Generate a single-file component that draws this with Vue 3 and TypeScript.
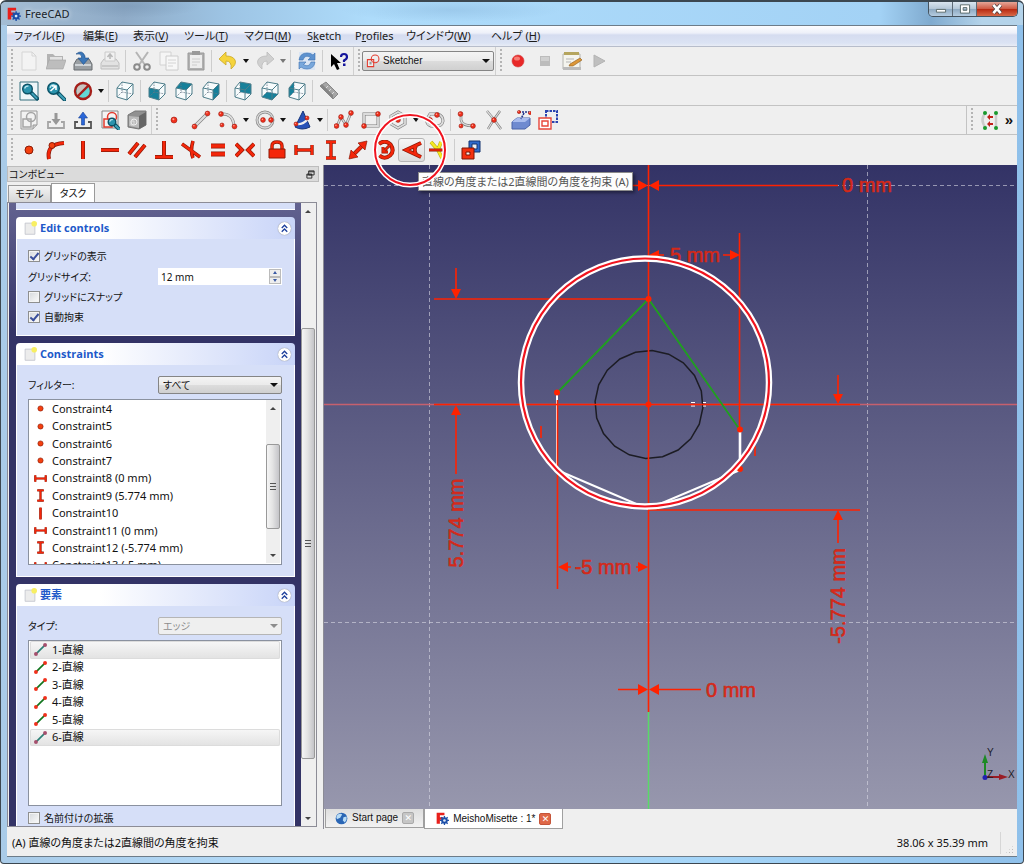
<script setup lang="ts">
import { ref } from 'vue'

interface ToolItem {
  icon?: string
  label?: string
  drop?: boolean
  dim?: boolean
  sep?: boolean
}

const thick = (d: string, w = 3): string =>
  `<path d="${d}" fill="none" stroke="#8d1a08" stroke-width="${w + 1}"/><path d="${d}" fill="none" stroke="#f4260a" stroke-width="${w - 0.4}"/>`
const ball = (x: number, y: number, r = 2.4): string =>
  `<circle cx="${x}" cy="${y}" r="${r}" fill="#f0301c" stroke="#9c1a10" stroke-width=".6"/><circle cx="${x - 0.6}" cy="${y - 0.7}" r="${r / 3}" fill="#ffa79a"/>`
const steel = (d: string, w = 3): string =>
  `<path d="${d}" fill="none" stroke="#7c7c7c" stroke-width="${w}"/><path d="${d}" fill="none" stroke="#dcdcdc" stroke-width="${w - 1.2}"/>`

const faces: Record<string, string> = {
  none: '',
  front: '2,7 12,9 12,19 2,16',
  top: '2,7 7,1 18,3 12,9',
  right: '12,9 18,3 18,13 12,19',
  rear: '7,1 18,3 18,13 7,11',
  bottom: '2,16 7,11 18,13 12,19',
  left: '2,7 7,1 7,11 2,16',
}
const cube = (face: string): string =>
  `<polygon points="2,7 7,1 18,3 18,13 12,19 2,16" fill="#f7fbfc"/>` +
  (faces[face] ? `<polygon points="${faces[face]}" fill="#16809a"/>` : '') +
  `<path d="M7 1V11L2 16M7 11L18 13" fill="none" stroke="#678" stroke-width=".8" stroke-dasharray="1.5 1"/>` +
  `<path d="M2 7L7 1L18 3V13L12 19L2 16ZM2 7L12 9L18 3M12 9V19" fill="none" stroke="#4d7d8a" stroke-width="1"/>`
const lens = (x: number, y: number, r: number): string =>
  `<path d="M${x + r * 0.6} ${y + r * 0.6}L${x + r * 2} ${y + r * 2}" stroke="#0b5266" stroke-width="4" stroke-linecap="round"/><path d="M${x + r} ${y + r}L${x + r * 1.9} ${y + r * 1.9}" stroke="#3fa0b8" stroke-width="2" stroke-linecap="round"/><circle cx="${x}" cy="${y}" r="${r}" fill="#2a93ad" stroke="#0b5266" stroke-width="1.4"/><path d="M${x - r * 0.6} ${y - r * 0.1}A${r * 0.7} ${r * 0.7} 0 0 1 ${x + r * 0.2} ${y - r * 0.6}" fill="none" stroke="#bfe9f2" stroke-width="1.3"/>`
const logo =
  `<path d="M1 1H13V5H6V8H11V12H6V18H1Z" fill="#e8201c"/><g fill="#1d4fa8"><circle cx="13" cy="13" r="5"/><path d="M12 6h2v14h-2zM6 12h14v2h-14z"/><path d="M12 6h2v14h-2zM6 12h14v2h-14z" transform="rotate(45 13 13)"/></g><circle cx="13" cy="13" r="2" fill="#dce8f5"/>`
const sketchShape = (c: string): string =>
  `<path d="M4 9H12V17H4Z" fill="none" stroke="${c}" stroke-width="1.5"/><circle cx="12" cy="7" r="4.5" fill="none" stroke="${c}" stroke-width="1.5"/>`

const icons: Record<string, string> = {
  logo,
  newdoc: `<path d="M3 1H13L17 5V19H3Z" fill="#f3f3f3" stroke="#d5d5d5"/><path d="M13 1V5H17" fill="none" stroke="#d5d5d5"/>`,
  open: `<path d="M1 3H7L9 5H17V17H1Z" fill="#b3b3b3"/><path d="M4 6H16V10H4Z" fill="#e2e2e2"/><path d="M0 18L3 9H20L17 18Z" fill="#bdbdbd" stroke="#a2a2a2" stroke-width=".6"/>`,
  save: `<path d="M1 13L4 8H16L19 13V19H1Z" fill="#9a9fa3" stroke="#686d71"/><path d="M2 13H18V15H2Z" fill="#ced3d7"/><path d="M3 3Q9 -2 12 5V7H16L10.500 13.500L5 7H8.500V5Q7 2 3 3Z" fill="#3a76b8" stroke="#1f4f88" stroke-width=".6"/>`,
  print: `<path d="M1 12L4 8H16L19 12V18H1Z" fill="#e2e2e2" stroke="#bdbdbd"/><path d="M2 14H18V16H2Z" fill="#c8c8c8"/><path d="M5 1H15V10H5Z" fill="#f1f1f1" stroke="#cacaca"/><path d="M10 8V4M7.500 6L10 3L12.500 6" fill="none" stroke="#b9b9b9" stroke-width="1.600"/>`,
  cut: `<path d="M4 1L13 14M16 1L7 14" stroke="#b5b5b5" stroke-width="2"/><circle cx="5" cy="16" r="2.800" fill="none" stroke="#8b8b8b" stroke-width="2"/><circle cx="15" cy="16" r="2.800" fill="none" stroke="#8b8b8b" stroke-width="2"/>`,
  copy: `<path d="M1 1H12V14H1Z" fill="#f5f5f5" stroke="#d2d2d2"/><path d="M7 5H19V19H7Z" fill="#f7f7f7" stroke="#ccc"/><path d="M9 9H17M9 12H17M9 15H14" stroke="#d4d4d4"/>`,
  paste: `<path d="M2 2H18V19H2Z" fill="#b0b0b0" stroke="#999"/><path d="M4 4H16V17H4Z" fill="#ededed"/><path d="M6 0H14V4H6Z" fill="#999"/><path d="M6 8H14M6 11H14M6 14H11" stroke="#ccc"/>`,
  undo: `<path d="M8 1L1 8L8 14V10Q14 10 13 18Q19 13 17 9Q15 5 8 5Z" fill="#f5d43c" stroke="#c9a727" stroke-width=".8"/>`,
  redo: `<path d="M12 1L19 8L12 14V10Q6 10 7 18Q1 13 3 9Q5 5 12 5Z" fill="#d0d0d0" stroke="#bbb" stroke-width=".8"/>`,
  refresh: `<path d="M2 1H18V19H2Z" fill="#dbe6f4"/><path d="M2 9Q3 2 10 2Q14 2 16 4L18 2V9H11L13.500 6.500Q8 3 6 9Z" fill="#5d92cf" stroke="#3d70b0" stroke-width=".6"/><path d="M18 11Q17 18 10 18Q6 18 4 16L2 18V11H9L6.500 13.500Q12 17 14 11Z" fill="#79a8dc" stroke="#3d70b0" stroke-width=".6"/>`,
  help: `<path d="M2 3V16L5 13L8 19L10.500 18L8 12H12Z" fill="#000"/><path d="M12 6Q12 3 15 3Q18 3 18 6Q18 8 15 9.500V11" fill="none" stroke="#16169c" stroke-width="2.200"/><path d="M14 12.500H16.500V15H14Z" fill="#16169c"/>`,
  record: `<circle cx="10" cy="10" r="6" fill="#e82828" stroke="#d34040" stroke-width=".6"/><ellipse cx="9" cy="7.500" rx="3" ry="2" fill="#f77d75"/>`,
  stop: `<path d="M5 5H15V15H5Z" fill="#bcbcbc"/><path d="M6 6H14V10H6Z" fill="#d0d0d0"/>`,
  edit: `<path d="M1 3H18V18H1Z" fill="#f4f4ee" stroke="#b4b4ae"/><path d="M2 1H17V4H2Z" fill="#b5a55e"/><path d="M4 8H12M4 11H9" stroke="#b5b5b5"/><path d="M8 13L18 7L20 9L11 15L7 15Z" fill="#dd9738" stroke="#8b5a1c" stroke-width=".6"/><path d="M1 16H19V19H1Z" fill="#bbb"/>`,
  play: `<path d="M5 4L16 10L5 16Z" fill="#bfbfbf" stroke="#b3b3b3"/>`,
  fit: `<path d="M1 1H19V19H1Z" fill="#eef6f9" stroke="#35717f"/>${lens(8.5, 8, 4.8)}`,
  zoomsel: `${lens(7.5, 7.5, 5.8)}<path d="M6 5H10V9M10 5L4.500 10" fill="none" stroke="#fff" stroke-width="1.600"/>`,
  drawstyle: `<circle cx="10" cy="10" r="8" fill="#63d8d6"/><path d="M4 15L15 4Q8 1 4 6Z" fill="#c9c4c0"/><circle cx="10" cy="10" r="8" fill="none" stroke="#a51f1a" stroke-width="2.400"/><path d="M4 16L16 4" stroke="#a51f1a" stroke-width="2.400"/>`,
  iso: cube('none'), front: cube('front'), top: cube('top'), right: cube('right'),
  rear: cube('rear'), bottom: cube('bottom'), left: cube('left'),
  measure: `<path d="M1 5L7 1L19 13L14 18Z" fill="#a5a5a5" stroke="#888"/><path d="M1 5L14 18V14L3 3Z" fill="#858585"/><path d="M9 5L7 7M12 8L10 10M15 11L13 13" stroke="#ddd"/>`,
  sketchnew: `<path d="M2 1H18V15L14 19H2Z" fill="#f2f2f2" stroke="#999"/>${sketchShape('#a5a5a5')}<path d="M18 15H14V19" fill="#ccc" stroke="#999"/>`,
  leave: `<path d="M5 12H2V18H18V12H15" fill="none" stroke="#a5a5a5" stroke-width="1.800"/><path d="M8.500 3H11.500V9H14.500L10 15L5.500 9H8.500Z" fill="#979797"/>`,
  attach: `<path d="M5 12H2V18H18V12H15" fill="none" stroke="#555" stroke-width="1.800"/><path d="M8.500 15H11.500V8H14.500L10 2L5.500 8H8.500Z" fill="#2a67d8" stroke="#153f93" stroke-width=".6"/>`,
  viewsketch: `<path d="M2 1H18V18H2Z" fill="#f4f4f4" stroke="#888"/>${sketchShape('#e33b2e')}${lens(12, 12, 3.8)}`,
  mapsketch: `<path d="M1 5L8 1H19V15L12 19L1 17Z" fill="#909090" stroke="#777"/><path d="M12 6L19 2V15L12 19Z" fill="#666"/><path d="M2 6L12 7V18L2 16Z" fill="#b9b9b9"/><circle cx="7" cy="12" r="3" fill="none" stroke="#eee"/><path d="M4 11H7V15H4Z" fill="none" stroke="#ddd"/>`,
  pt: ball(10, 10, 3),
  line: `${steel('M3 17L17 3', 3.6)}${ball(3.5, 16.5)}${ball(16.5, 3.5)}`,
  arc: `${steel('M3 4Q15 3 16 16', 3)}${ball(3, 4)}${ball(4, 15, 2)}${ball(16.5, 16.5)}`,
  circle: `<circle cx="10" cy="10" r="8" fill="none" stroke="#888" stroke-width="2.800"/><circle cx="10" cy="10" r="8" fill="none" stroke="#d6d6d6" stroke-width="1.400"/>${ball(8, 10)}${ball(16, 10)}`,
  conic: `<path d="M11 1L18 17Q10 21 3 17Z" fill="#2752b8" stroke="#173578"/><path d="M4 14Q11 15 16 9" fill="none" stroke="#eee" stroke-width="2"/>${ball(4, 14, 2)}${ball(15, 8, 2)}`,
  poly: `${steel('M3 16L7 7L12 15L17 3', 2.6)}${ball(2.500, 16)}${ball(7, 7)}${ball(12, 15)}${ball(17, 3)}`,
  rect: `${steel('M3 4H17V16H3Z', 3)}${ball(3, 16)}${ball(17, 4)}`,
  hex: `${steel('M10 2L17 6V14L10 18L3 14V6Z', 3)}${ball(10, 10)}`,
  slot: `${steel('M5 4H13Q18 6 18 11Q17 16 12 16H6Q1 14 2 9Z', 3)}${ball(5, 10)}${ball(12, 5)}`,
  fillet: `${steel('M4 2V10Q5 16 17 16', 2.600)}${ball(3.500, 4)}${ball(4, 16, 2)}${ball(16, 16)}`,
  trim: `${steel('M3 1Q10 9 17 19M16 1Q9 10 4 19', 2.400)}${ball(10, 10)}`,
  external: `<path d="M1 12L6 8H19V15L14 19H1Z" fill="#6f8ad0" stroke="#4a62a8"/><path d="M1 12L6 8H19L14 12Z" fill="#a9bcee"/><path d="M8 2H18M13 3L10 9" fill="none" stroke="#26388f" stroke-width="1.600" stroke-dasharray="2 1"/>${ball(8, 2, 1.6)}${ball(19, 3, 1.6)}`,
  carbon: `<path d="M8 1H19V12H8Z" fill="none" stroke="#2a43b0" stroke-width="2" stroke-dasharray="2.500 1"/><path d="M1 8H13V19H1ZM4 11H10V16H4Z" fill="#fff" stroke="#e8453a" stroke-width="1.400"/>`,
  bspline: `<path d="M7 2Q0 10 7 18M17 3V17" fill="none" stroke="#ccc" stroke-width="2.500"/><g fill="#1a9a2e"><circle cx="6" cy="3" r="2"/><circle cx="17" cy="3" r="2"/><circle cx="6" cy="18" r="2"/><circle cx="17" cy="18" r="2"/></g><path d="M14 7H10M14 14H10" stroke="#c0201a" stroke-width="2"/><path d="M11 4V10L8 7ZM11 11V17L8 14Z" fill="#c0201a"/>`,
  cpoint: `<circle cx="10" cy="10" r="4" fill="#f4400f" stroke="#8a1b08"/>`,
  conobj: `${thick('M3 19Q0 4 18 3', 3)}<circle cx="6" cy="5.500" r="3" fill="#f4400f" stroke="#8a1b08"/>`,
  cvert: thick('M10 1V19'),
  chor: thick('M1 10H19'),
  cpar: thick('M2 14L11 3M8 17L18 5'),
  cperp: thick('M10 1V17M1 17H19'),
  ctan: thick('M1 4L19 17M12 1Q9 11 12 18', 2.6),
  cequal: thick('M3 6H17M3 14H17', 4),
  csym: thick('M1 4L7 10L1 16M19 4L13 10L19 16', 3),
  clock: `<path d="M5 9V6Q5 2 10 2Q15 2 15 6V9" fill="none" stroke="#8d1a08" stroke-width="3.400"/><path d="M5 9V6Q5 2 10 2Q15 2 15 6V9" fill="none" stroke="#f4260a" stroke-width="2"/><path d="M2 9H18V18H2Z" fill="#f4260a" stroke="#8d1a08"/>`,
  chdist: thick('M2 5V15M18 5V15M2 10H18', 2.4),
  cvdist: thick('M5 2H15M5 18H15M10 2V18', 2.4),
  cdist: `${thick('M5 15L15 5', 3)}<path d="M1 19L3 10L10 17ZM19 1L17 10L10 3Z" fill="#f4260a" stroke="#8d1a08" stroke-width=".7"/>`,
  crad: `${thick('M4 4Q10 -1 15.500 4.500Q20 11 15 15.500Q9.500 20 4.500 15.500', 3)}${thick('M9 11L15 5M8 7V12H13', 2)}`,
  cangle: thick('M19 3L4 10L19 17M14 6Q11.500 10 14 14', 2.8),
  csnell: `<path d="M2 2L9 10L13 18M12 2L9 10" fill="none" stroke="#b8ac12" stroke-width="3.600"/><path d="M2 2L9 10L13 18M12 2L9 10" fill="none" stroke="#f5ea22" stroke-width="2.600"/>${thick('M0 10H14', 2)}`,
  ctoggle: `<path d="M8 1H19V12H8ZM11 4H16V9H11Z" fill="#2e6acc" fill-rule="evenodd" stroke="#12336e"/><path d="M1 8H13V19H1ZM5 12H9V15H5Z" fill="#f4300f" fill-rule="evenodd" stroke="#7d1405"/>`,
  note: `<path d="M3 3H17V19H3Z" fill="#ececec" stroke="#b9bcc6"/><circle cx="16" cy="4" r="4" fill="#f8ef62"/>`,
  sketcher: `<path d="M2 8H11V18H2Z" fill="#eee" stroke="#e33b2e" stroke-width="1.500"/><circle cx="13" cy="7" r="5.500" fill="none" stroke="#e33b2e" stroke-width="1.500"/><path d="M5 11H8V15H5Z" fill="#999"/>`,
  edge: `<path d="M4 16L16 4" stroke="#12761f" stroke-width="2.600"/><circle cx="3" cy="17" r="3" fill="#f0301c"/><circle cx="17" cy="3" r="3" fill="#f0301c"/>`,
  edgesel: `<path d="M4 16L16 4" stroke="#2c8076" stroke-width="2.600"/><circle cx="3" cy="17" r="3" fill="#a54f6d"/><circle cx="17" cy="3" r="3" fill="#a54f6d"/>`,
  chevrons: `<path d="M5 9L10 4L15 9M5 16L10 11L15 16" fill="none" stroke="#1c3f9c" stroke-width="2.400"/>`,
  globe: `<circle cx="10" cy="10" r="9" fill="#2a66b5"/><path d="M4 4Q9 1 11 4L8 9L3 11Q1 7 4 4ZM13 8L18 7Q19 12 15 16L12 13Z" fill="#b9dcf5"/>`,
  float: `<path d="M6 2H18V11H6ZM6 4H18M2 9H13V18H2ZM2 11H13" fill="#dcdcdc" stroke="#222" stroke-width="2"/>`,
}

const t = (icon: string, label: string, extra: Partial<ToolItem> = {}): ToolItem => ({ icon, label, ...extra })
const sep: ToolItem = { sep: true }

const fileTools: ToolItem[] = [
  t('newdoc', 'New'), t('open', 'Open'), t('save', 'Save'), t('print', 'Print'), sep,
  t('cut', 'Cut'), t('copy', 'Copy'), t('paste', 'Paste'), sep,
  t('undo', 'Undo', { drop: true }), t('redo', 'Redo', { drop: true, dim: true }), sep,
  t('refresh', 'Refresh'), sep, t('help', "What's this?"),
]
const macroTools: ToolItem[] = [t('record', 'Record'), t('stop', 'Stop'), t('edit', 'Macros'), t('play', 'Execute')]
const viewTools: ToolItem[] = [
  t('fit', 'Fit all'), t('zoomsel', 'Fit selection'), t('drawstyle', 'Draw style', { drop: true }), sep,
  t('iso', 'Axonometric'), sep, t('front', 'Front'), t('top', 'Top'), t('right', 'Right'), sep,
  t('rear', 'Rear'), t('bottom', 'Bottom'), t('left', 'Left'), sep, t('measure', 'Measure'),
]
const sketchTools: ToolItem[] = [
  t('sketchnew', 'New sketch'), t('leave', 'Leave sketch'), t('attach', 'Attach'),
  t('viewsketch', 'View sketch'), t('mapsketch', 'Map sketch'),
]
const geometryTools: ToolItem[] = [
  t('pt', 'Point'), t('line', 'Line'), t('arc', 'Arc', { drop: true }), t('circle', 'Circle', { drop: true }),
  t('conic', 'Conic', { drop: true }), sep, t('poly', 'Polyline'), t('rect', 'Rectangle'),
  t('hex', 'Polygon', { drop: true }), t('slot', 'Slot'), sep, t('fillet', 'Fillet'), t('trim', 'Trim'),
  t('external', 'External geometry'), t('carbon', 'Construction mode'),
]
const constraintTools: ToolItem[] = [
  t('cpoint', 'Coincident'), t('conobj', 'Point on object'), t('cvert', 'Vertical'), t('chor', 'Horizontal'),
  t('cpar', 'Parallel'), t('cperp', 'Perpendicular'), t('ctan', 'Tangent'), t('cequal', 'Equal'),
  t('csym', 'Symmetric'), sep, t('clock', 'Lock'), t('chdist', 'Horizontal distance'),
  t('cvdist', 'Vertical distance'), t('cdist', 'Distance'), t('crad', 'Radius'), t('cangle', 'Angle'),
  t('csnell', "Snell's law"), sep, t('ctoggle', 'Toggle reference'),
]

const menus: { pre: string; key: string; post: string }[] = [
  { pre: 'ファイル(', key: 'F', post: ')' },
  { pre: '編集(', key: 'E', post: ')' },
  { pre: '表示(', key: 'V', post: ')' },
  { pre: 'ツール(', key: 'T', post: ')' },
  { pre: 'マクロ(', key: 'M', post: ')' },
  { pre: 'S', key: 'k', post: 'etch' },
  { pre: 'P', key: 'r', post: 'ofiles' },
  { pre: 'ウインドウ(', key: 'W', post: ')' },
  { pre: 'ヘルプ (', key: 'H', post: ')' },
]

const constraints: { icon: string; text: string }[] = [
  { icon: 'cpoint', text: 'Constraint4' },
  { icon: 'cpoint', text: 'Constraint5' },
  { icon: 'cpoint', text: 'Constraint6' },
  { icon: 'cpoint', text: 'Constraint7' },
  { icon: 'chdist', text: 'Constraint8 (0 mm)' },
  { icon: 'cvdist', text: 'Constraint9 (5.774 mm)' },
  { icon: 'cvert', text: 'Constraint10' },
  { icon: 'chdist', text: 'Constraint11 (0 mm)' },
  { icon: 'cvdist', text: 'Constraint12 (-5.774 mm)' },
  { icon: 'chdist', text: 'Constraint13 (-5 mm)' },
]
const elements = [1, 2, 3, 4, 5, 6]
const picked = ref<number[]>([1, 6])

const showGrid = ref(true)
const snapGrid = ref(false)
const autoConstrain = ref(true)
const extendedNaming = ref(false)
const gridSize = ref('12 mm')

const circlePoints = Array.from({ length: 20 }, (_, i) => {
  const a = (i * Math.PI) / 10 + 0.06
  return `${(649 + 54 * Math.cos(a)).toFixed(1)},${(404.5 + 54 * Math.sin(a)).toFixed(1)}`
}).join(' ')
</script>

<template>
  <div class="window">
    <header class="titlebar">
      <svg class="title-icon" viewBox="0 0 20 20" v-html="icons.logo"></svg>
      <span class="title">FreeCAD</span>
      <div class="window-buttons">
        <button class="wb" aria-label="Minimize"><svg viewBox="0 0 24 16"><path d="M7 9H17V12H7Z" fill="#fff" stroke="#566" /></svg></button>
        <button class="wb" aria-label="Maximize"><svg viewBox="0 0 24 16"><path d="M7 4H17V13H7ZM10 7H14V10H10Z" fill="#fff" fill-rule="evenodd" stroke="#566" /></svg></button>
        <button class="wb close" aria-label="Close"><svg viewBox="0 0 24 16"><path d="M8 4L16 13M16 4L8 13" stroke="#544" stroke-width="4.500" /><path d="M8 4L16 13M16 4L8 13" stroke="#fff" stroke-width="2.800" /></svg></button>
      </div>
    </header>

    <div class="client">
      <nav class="menubar">
        <button v-for="m in menus" :key="m.key" class="menu">{{ m.pre }}<u>{{ m.key }}</u>{{ m.post }}</button>
      </nav>

      <div class="toolrow">
        <div class="toolbar">
          <i class="handle"></i>
          <template v-for="(it, i) in fileTools" :key="i">
            <i v-if="it.sep" class="sep"></i>
            <button v-else class="tool" :aria-label="it.label"><svg viewBox="0 0 20 20" v-html="icons[it.icon!]"></svg></button>
            <button v-if="it.drop" class="drop" :class="{ dim: it.dim }" :aria-label="it.label + ' history'"></button>
          </template>
        </div>
        <div class="toolbar">
          <i class="handle"></i>
          <div class="combo workbench">
            <svg class="combo-icon" viewBox="0 0 20 20" v-html="icons.sketcher"></svg>
            <select aria-label="Workbench"><option>Sketcher</option></select>
          </div>
        </div>
        <div class="toolbar">
          <i class="handle"></i>
          <button v-for="it in macroTools" :key="it.icon" class="tool" :aria-label="it.label"><svg viewBox="0 0 20 20" v-html="icons[it.icon!]"></svg></button>
        </div>
      </div>

      <div class="toolrow">
        <div class="toolbar">
          <i class="handle"></i>
          <template v-for="(it, i) in viewTools" :key="i">
            <i v-if="it.sep" class="sep"></i>
            <button v-else class="tool" :aria-label="it.label"><svg viewBox="0 0 20 20" v-html="icons[it.icon!]"></svg></button>
            <button v-if="it.drop" class="drop" :aria-label="it.label + ' options'"></button>
          </template>
        </div>
      </div>

      <div class="toolrow">
        <div class="toolbar">
          <i class="handle"></i>
          <button v-for="it in sketchTools" :key="it.icon" class="tool" :aria-label="it.label"><svg viewBox="0 0 20 20" v-html="icons[it.icon!]"></svg></button>
        </div>
        <div class="toolbar open-ended">
          <i class="handle"></i>
          <template v-for="(it, i) in geometryTools" :key="i">
            <i v-if="it.sep" class="sep"></i>
            <button v-else class="tool" :aria-label="it.label"><svg viewBox="0 0 20 20" v-html="icons[it.icon!]"></svg></button>
            <button v-if="it.drop" class="drop" :aria-label="it.label + ' options'"></button>
          </template>
        </div>
        <div class="toolbar trailing">
          <i class="handle"></i>
          <button class="tool" aria-label="B-spline"><svg viewBox="0 0 20 20" v-html="icons.bspline"></svg></button>
          <button class="more" aria-label="More tools">»</button>
        </div>
      </div>

      <div class="toolrow last">
        <div class="toolbar">
          <i class="handle"></i>
          <template v-for="(it, i) in constraintTools" :key="i">
            <i v-if="it.sep" class="sep"></i>
            <span v-else-if="it.icon === 'cangle'" class="tip-anchor">
              <button class="tool hot" :aria-label="it.label"><svg viewBox="0 0 20 20" v-html="icons.cangle"></svg></button>
              <span class="tooltip" role="tooltip">直線の角度または2直線間の角度を拘束 (A)</span>
              <svg class="ring" viewBox="0 0 76 76">
                <circle cx="38" cy="38" r="35" fill="none" stroke="#fff" stroke-width="5" />
                <circle cx="38" cy="38" r="35" fill="none" stroke="#f01420" stroke-width="2" />
              </svg>
            </span>
            <button v-else class="tool" :aria-label="it.label"><svg viewBox="0 0 20 20" v-html="icons[it.icon!]"></svg></button>
          </template>
        </div>
      </div>

      <main class="main">
        <aside class="dock">
          <div class="dock-title">
            <span>コンボビュー</span>
            <button class="float" aria-label="Float"><svg viewBox="0 0 20 20" v-html="icons.float"></svg></button>
          </div>
          <div class="dock-tabs" role="tablist">
            <button role="tab" class="dtab">モデル</button>
            <button role="tab" class="dtab on" aria-selected="true">タスク</button>
          </div>
          <div class="page">
            <div class="tasks">
              <div class="stub"></div>

              <section class="panel">
                <h2 class="phead">
                  <svg class="pnote" viewBox="0 0 20 20" v-html="icons.note"></svg><span>Edit controls</span>
                  <button class="fold" aria-label="Fold"><svg viewBox="0 0 20 20" v-html="icons.chevrons"></svg></button>
                </h2>
                <div class="pbody controls">
                  <label class="check"><input v-model="showGrid" type="checkbox" />グリッドの表示</label>
                  <div class="field">
                    <label for="grid-size">グリッドサイズ:</label>
                    <div class="spin">
                      <input id="grid-size" v-model="gridSize" type="text" />
                      <div class="spin-buttons">
                        <button class="up" aria-label="Increase"></button>
                        <button class="down" aria-label="Decrease"></button>
                      </div>
                    </div>
                  </div>
                  <label class="check"><input v-model="snapGrid" type="checkbox" />グリッドにスナップ</label>
                  <label class="check"><input v-model="autoConstrain" type="checkbox" />自動拘束</label>
                </div>
              </section>

              <section class="panel">
                <h2 class="phead">
                  <svg class="pnote" viewBox="0 0 20 20" v-html="icons.note"></svg><span>Constraints</span>
                  <button class="fold" aria-label="Fold"><svg viewBox="0 0 20 20" v-html="icons.chevrons"></svg></button>
                </h2>
                <div class="pbody">
                  <div class="field">
                    <label for="filter">フィルター:</label>
                    <div class="combo"><select id="filter"><option>すべて</option></select></div>
                  </div>
                  <div class="listbox">
                    <ul class="rows">
                      <li v-for="c in constraints" :key="c.text"><svg viewBox="0 0 20 20" v-html="icons[c.icon]"></svg>{{ c.text }}</li>
                    </ul>
                    <div class="scroll">
                      <button class="arrow up" aria-label="Scroll up"></button>
                      <div class="track inner"><div class="thumb"></div></div>
                      <button class="arrow down" aria-label="Scroll down"></button>
                    </div>
                  </div>
                </div>
              </section>

              <section class="panel grow">
                <h2 class="phead">
                  <svg class="pnote" viewBox="0 0 20 20" v-html="icons.note"></svg><span>要素</span>
                  <button class="fold" aria-label="Fold"><svg viewBox="0 0 20 20" v-html="icons.chevrons"></svg></button>
                </h2>
                <div class="pbody cut">
                  <div class="field">
                    <label for="kind">タイプ:</label>
                    <div class="combo off"><select id="kind" disabled><option>エッジ</option></select></div>
                  </div>
                  <div class="listbox">
                    <ul class="rows six">
                      <li v-for="n in elements" :key="n" :class="{ sel: picked.includes(n) }">
                        <svg viewBox="0 0 20 20" v-html="icons[picked.includes(n) ? 'edgesel' : 'edge']"></svg>{{ n }}-直線
                      </li>
                    </ul>
                  </div>
                  <label class="check naming"><input v-model="extendedNaming" type="checkbox" />名前付けの拡張</label>
                </div>
              </section>
            </div>
            <div class="scroll">
              <button class="arrow up" aria-label="Scroll up"></button>
              <div class="track outer"><div class="thumb"></div></div>
              <button class="arrow down" aria-label="Scroll down"></button>
            </div>
          </div>
        </aside>

        <section class="view">
          <div class="canvas">
            <svg class="scene" viewBox="324 165 693 644" preserveAspectRatio="xMidYMid slice">
              <g class="grid">
                <path d="M429.500 165V809M867.500 165V809M324 185.500H1017M324 622.500H1017" />
              </g>
              <path d="M324 404.500H1017" stroke="#c6606e" stroke-width="1.500" />
              <path d="M648.500 712V809" stroke="#59d968" stroke-width="1.500" />
              <polygon :points="circlePoints" fill="none" stroke="#1c1c24" stroke-width="1.500" />
              <path d="M557 393V470L648 509L740 470" fill="none" stroke="#fff" stroke-width="2" />
              <path d="M740 430V462" stroke="#fff" stroke-width="2.600" />
              <path d="M691 402.500H695M691 406H695M703 402.500H706M703 406H706" stroke="#fff" />
              <g class="dims">
                <path d="M434 404.500H860M648.500 165V712M434 299H648M648 510H860M739.500 233V430M557.500 400V589" />
                <path d="M618 185.500H640M658 185.500H838M658 255H664M723 255H730M456 268V290M456 414V474M838 375V395M838 519V543M567 567H571M636 567H640M618 689.500H640M658 689.500H701" />
                <path d="M541 426V438M755 446V456" stroke-width="2" />
              </g>
              <path d="M557 393L648.500 299L740 430" fill="none" stroke="#1fa01f" stroke-width="1.800" />
              <g fill="#ff2200">
                <path d="M648 185.500L638 180V191ZM649 185.500L659 180V191ZM649 255L659 250V260ZM740 255L730 250V260ZM456 299L451 289H461ZM456 405L451 415H461ZM838 404L833 394H843ZM838 510L833 520H843ZM558 567L568 562V572ZM648 567L638 562V572ZM648 689.500L638 684V695ZM649 689.500L659 684V695Z" />
                <circle cx="648.500" cy="299" r="3" /><circle cx="557" cy="392.500" r="3" /><circle cx="740" cy="429.500" r="3" />
                <circle cx="740" cy="469" r="3" /><circle cx="648.500" cy="404.500" r="3" />
              </g>
              <g class="dimtext">
                <text x="867" y="192">0 mm</text>
                <text x="695" y="262">5 mm</text>
                <text x="603" y="574">-5 mm</text>
                <text x="731" y="697">0 mm</text>
                <text transform="translate(463 523) rotate(-90)">5.774 mm</text>
                <text transform="translate(845 596) rotate(-90)">-5.774 mm</text>
              </g>
              <circle cx="645" cy="382.500" r="124" fill="none" stroke="#fff" stroke-width="6.500" />
              <circle cx="645" cy="382.500" r="124" fill="none" stroke="#f0141e" stroke-width="2.200" />
              <g class="axes">
                <path d="M985 777V760" stroke="#1c8a24" stroke-width="2" /><path d="M985 754L988 763H982Z" fill="#1c8a24" />
                <path d="M985 777H1000" stroke="#9a1c24" stroke-width="2" /><path d="M1008 777L999 774V780Z" fill="#9a1c24" />
                <circle cx="985" cy="777.500" r="2.500" fill="#2222b0" />
                <text x="987" y="756">Y</text><text x="987" y="778">Z</text><text x="1008" y="778">X</text>
              </g>
            </svg>
          </div>
          <div class="doc-tabs" role="tablist">
            <div class="doc">
              <svg viewBox="0 0 20 20" v-html="icons.globe"></svg>
              <button role="tab">Start page</button>
              <button class="x" aria-label="Close tab">✕</button>
            </div>
            <div class="doc on">
              <svg viewBox="0 0 20 20" v-html="icons.logo"></svg>
              <button role="tab" aria-selected="true">MeishoMisette : 1*</button>
              <button class="x" aria-label="Close tab">✕</button>
            </div>
          </div>
        </section>
      </main>

      <footer class="status">
        <span>(A) 直線の角度または2直線間の角度を拘束</span>
        <span class="size">38.06 x 35.39 mm</span>
        <i class="grip"></i>
      </footer>
    </div>
  </div>
</template>

<style>
body { margin: 0; }
</style>

<style scoped>
* { box-sizing: border-box; }
button, select, input { font: inherit; color: inherit; margin: 0; }
button { padding: 0; border: 0; background: none; white-space: nowrap; }
ul { margin: 0; padding: 0; list-style: none; }
svg { display: block; flex: none; }
i { flex: none; }

.window {
  display: flex;
  flex-direction: column;
  height: 100vh;
  overflow: hidden;
  padding: 0 6px 6px 6px;
  border: 1px solid #3c4750;
  border-top-width: 2px;
  border-radius: 6px 6px 4px 4px;
  background: linear-gradient(90deg, #a9cbe8, #b4dcfa 30%, #a5d5f8 70%, #8fc0ea);
  font: 11px/16px "Noto Sans", "Noto Sans CJK JP", sans-serif;
  font-feature-settings: "palt";
  color: #111;
}
.titlebar {
  display: flex;
  align-items: center;
  height: 23px;
  flex: none;
  margin: 0 -6px;
  padding-left: 6px;
  background:
    radial-gradient(ellipse 70px 12px at 130px 4px, #6d8aa866, transparent),
    radial-gradient(ellipse 110px 12px at 450px 8px, #6f9cc544, transparent),
    linear-gradient(90deg, #a4bdd4, #8fabc7 12%, #9dc4e4 22%, #aedcfb 36%, #a3d2f5 86%, #7faacf 91%, #b4d3ea 96%);
}
.title-icon { width: 14px; height: 14px; }
.title { margin-left: 4px; font-size: 11px; color: #1a242c; text-shadow: 0 0 5px #fff; }
.window-buttons {
  display: flex;
  align-self: flex-start;
  margin: 0 5px 0 auto;
  border: 1px solid #45525e;
  border-top: 0;
  border-radius: 0 0 5px 5px;
  overflow: hidden;
}
.wb { width: 24px; height: 14px; background: linear-gradient(#d9e5ef, #b4c7d8 48%, #8faac2 52%, #b5cce0); border-right: 1px solid #5d6a76; }
.wb svg { width: 22px; height: 15px; margin: -1px auto 0; }
.close { width: 40px; border-right: 0; background: linear-gradient(#e5a698, #cf5a44 48%, #b82a12 52%, #d96a48); }

.client {
  display: flex;
  flex-direction: column;
  flex: 1;
  min-height: 0;
  border: 1px solid #6d7c89;
  border-width: 1px 0;
  background: #efefef;
}
.menubar {
  display: grid;
  grid-template-columns: 69px 50px 51px 60px 63px 48px 51px 85px 70px;
  height: 21px;
  flex: none;
  padding-left: 7px;
  background: linear-gradient(#fdfdff, #edf0f9 35%, #d5dcf0 45%, #dbe3f4 85%, #e8ecf5);
  border-bottom: 1px solid #b7bdcb;
}
.menu { text-align: left; color: #1b1b1b; }

.toolrow { display: flex; height: 29px; flex: none; border-bottom: 1px solid #c3c3c3; background: #efefef; }
.toolrow:nth-child(3) { height: 30px; }
.toolrow.last { height: 30px; border-bottom: 0; }
.toolbar { display: flex; align-items: center; padding-right: 1px; border-right: 1px solid #d0d0d0; }
.toolbar:only-child, .toolbar:last-child, .open-ended { border-right: 0; }
.trailing { margin-left: auto; border-left: 1px solid #c3c3c3; }
.handle {
  width: 8px;
  height: 24px;
  background: repeating-linear-gradient(#b4b4b4 0 2px, transparent 2px 4px) no-repeat 4px 0 / 2px 24px;
}
.sep { width: 1px; height: 22px; margin: 0 2px; background: #cdcdcd; }
.tool { display: grid; place-items: center; width: 27px; height: 24px; flex: none; }
.tool svg { width: 20px; height: 20px; }
.hot { border: 1px solid #b5b5b5; border-radius: 3px; background: linear-gradient(#f6f6f6, #dcdcdc); }
.drop { display: grid; place-items: center; width: 10px; height: 24px; }
.drop::after { content: ""; border: 3px solid transparent; border-top: 4px solid #111; border-bottom: 0; }
.drop.dim::after { border-top-color: #777; }
.more { width: 14px; font: bold 15px/20px "Liberation Sans", sans-serif; }

.tip-anchor { position: relative; z-index: 2; }
.tooltip {
  position: absolute;
  left: 20px;
  top: 34px;
  padding: 0 3px;
  border: 1px solid #8c8c8c;
  background: #fdfdfd;
  box-shadow: 2px 2px 3px #0006;
  line-height: 17px;
  color: #555;
  white-space: nowrap;
}
.ring { position: absolute; left: -26px; top: -26px; width: 76px; height: 76px; pointer-events: none; }

.combo { position: relative; width: 124px; height: 18px; font-size: 10px; }
.combo select {
  display: block;
  width: 100%;
  height: 100%;
  padding: 0 4px;
  appearance: none;
  border: 1px solid #858585;
  border-radius: 2px;
  background: linear-gradient(#f4f4f4, #ebebeb 48%, #dcdcdc 52%, #d0d0d0);
  color: #111;
  opacity: 1;
}
.combo::after {
  content: "";
  position: absolute;
  right: 4px;
  top: 7px;
  border: 4px solid transparent;
  border-top: 4px solid #111;
  border-bottom: 0;
}
.combo.off select { background: #efefef; border-color: #b5b5b5; color: #8d8d8d; }
.combo.off::after { border-top-color: #8d8d8d; }
.workbench { width: 132px; height: 20px; font-family: "Liberation Sans", sans-serif; }
.workbench select { padding-left: 20px; }
.workbench::after { top: 8px; }
.combo-icon { position: absolute; left: 4px; top: 3px; width: 14px; height: 14px; }

.main { display: flex; flex: 1; min-height: 0; }
.dock { display: flex; flex-direction: column; width: 316px; flex: none; padding: 1px 6px 2px 0; }
.dock-title {
  display: flex;
  align-items: center;
  justify-content: space-between;
  height: 16px;
  flex: none;
  margin-right: -2px;
  padding: 0 3px 0 1px;
  border: 1px solid #bdbdbd;
  background: #dbdbdb;
  font-size: 10px;
}
.float svg { width: 9px; height: 9px; }
.dock-tabs { display: flex; align-items: flex-end; height: 20px; flex: none; padding-left: 1px; font-size: 10px; }
.dtab { width: 43px; height: 17px; border: 1px solid #9a9a9a; border-bottom: 0; background: linear-gradient(#f3f3f3, #d6d6d6); }
.dtab.on { width: 44px; height: 19px; background: #fff; }
.page { display: flex; flex: 1; min-height: 0; border: 1px solid #8c8c96; padding: 0 1px; background: #efefef; }
.tasks {
  display: flex;
  flex-direction: column;
  gap: 7px;
  flex: 1;
  min-height: 0;
  overflow: hidden;
  padding: 0 6px 0 7px;
  background: linear-gradient(#626290, #333366 130px);
}
.stub { height: 7px; flex: none; background: #d6dff8; border-bottom: 1px solid #fff; }
.panel { flex: none; }
.panel.grow { flex: 1; min-height: 0; overflow: hidden; display: flex; flex-direction: column; }
.phead {
  display: flex;
  align-items: center;
  height: 22px;
  flex: none;
  margin: 0;
  padding: 0 4px 0 7px;
  border-radius: 4px 4px 0 0;
  background: linear-gradient(90deg, #fff 30%, #c8d4f8);
  font: bold 11px/16px "Open Sans", "Noto Sans CJK JP", sans-serif;
  color: #2159c9;
}
.pnote { width: 14px; height: 14px; margin-right: 3px; }
.fold { display: grid; place-items: center; width: 13px; height: 13px; margin-left: auto; border-radius: 50%; background: #fff; box-shadow: 0 0 1px #666; }
.fold svg { width: 11px; height: 11px; }
.pbody { height: 212px; padding: 11px 12px 0 11px; border: 1px solid #fff; border-top: 0; background: #d6dff8; font-size: 10px; }
.pbody.controls { height: 97px; padding-top: 7px; }
.pbody.cut { flex: 1; border-bottom: 0; }
.check { display: flex; align-items: center; gap: 4px; height: 20px; }
.naming { margin-top: 2px; }
.check input {
  display: grid;
  place-items: center;
  width: 12px;
  height: 12px;
  appearance: none;
  border: 1px solid #8e8f8f;
  background: linear-gradient(135deg, #d5d8dc, #fbfbfb);
  box-shadow: inset 0 0 0 1px #f4f4f4;
}
.check input:checked::after { content: ""; width: 3px; height: 7px; margin-top: -2px; border: solid #3a4f9c; border-width: 0 2px 2px 0; rotate: 40deg; }
.field { display: flex; align-items: center; justify-content: space-between; }
.controls .field { height: 21px; }
.spin { display: flex; width: 124px; height: 17px; padding: 1px; background: #fff; }
.spin input { flex: 1; min-width: 0; padding: 0 2px; border: 0; background: none; outline: 0; }
.spin-buttons { display: flex; flex-direction: column; width: 12px; }
.spin-buttons button { display: grid; place-items: center; flex: 1; border: 1px solid #bbb; background: #eee; }
.spin-buttons button::after { content: ""; border: 2px solid transparent; }
.spin-buttons .up::after { border-bottom: 3px solid #3c5ba5; border-top: 0; }
.spin-buttons .down::after { border-top: 3px solid #3c5ba5; border-bottom: 0; }

.listbox { display: flex; height: 166px; margin-top: 5px; padding: 0 1px 1px; border: 1px solid #8a919f; background: #fff; font-size: 11px; overflow: hidden; }
.rows { display: flex; flex-direction: column; flex: 1; height: 174px; }
.rows.six { height: 105px; }
.rows li { display: flex; align-items: center; flex: 1; gap: 5px; padding-left: 4px; white-space: nowrap; }
.rows svg { width: 13px; height: 13px; }
.rows .sel { border-radius: 2px; background: linear-gradient(#f7f7f7, #e2e2e2); box-shadow: inset 0 0 0 1px #dcdcdc; }

.scroll { display: flex; flex-direction: column; width: 14px; flex: none; background: #efefef; }
.arrow { display: grid; place-items: center; height: 16px; flex: none; }
.arrow::after { content: ""; border: 3px solid transparent; }
.arrow.up::after { border-bottom: 3px solid #444; border-top: 0; }
.arrow.down::after { border-top: 3px solid #444; border-bottom: 0; }
.track { display: grid; flex: 1; min-height: 0; }
.track.inner { grid-template-rows: 28fr 84fr 18fr; }
.track.outer { grid-template-rows: 109fr 431fr 51fr; }
.thumb {
  grid-row: 2;
  display: grid;
  place-items: center;
  border: 1px solid #999;
  border-radius: 2px;
  background: linear-gradient(90deg, #f5f5f5, #e4e4e4 45%, #c4c4c8);
}
.thumb::after { content: ""; width: 6px; height: 7px; background: repeating-linear-gradient(#555 0 1px, transparent 1px 3px); }

.view { display: flex; flex-direction: column; flex: 1; min-width: 0; border-left: 1px solid #8c8c96; }
.canvas { flex: 1; min-height: 0; background: linear-gradient(#333366, #9797ad); }
.scene { width: 100%; height: 100%; }
.grid path { fill: none; stroke: #d8d8e4; stroke-opacity: 0.6; stroke-dasharray: 4 3; }
.dims path { fill: none; stroke: #ff2200; stroke-width: 1.6px; }
.dimtext text { font: 20px "Liberation Sans", sans-serif; text-anchor: middle; fill: #d82a1a; stroke: #d02818; stroke-width: 0.6px; }
.axes text { font: 10px "Liberation Sans", sans-serif; fill: #1c1c28; }
.doc-tabs { display: flex; height: 20px; flex: none; padding-left: 1px; }
.doc {
  display: flex;
  align-items: center;
  gap: 4px;
  height: 19px;
  padding: 0 9px;
  border: 1px solid #a0a0a0;
  border-top: 0;
  background: linear-gradient(#dedede, #f2f2f2);
  font: 10px/16px "Liberation Sans", sans-serif;
}
.doc svg { width: 13px; height: 13px; }
.doc.on { height: 20px; padding: 0 11px; background: #fff; }
.x { width: 12px; height: 12px; border: 1px solid #aaa; border-radius: 2px; background: #c6c6c6; color: #fff; font: bold 9px/10px "DejaVu Sans", sans-serif; }
.on .x { background: #df6848; border-color: #c5553a; }

.status { display: flex; align-items: center; height: 27px; flex: none; padding: 0 2px 0 5px; }
.size { margin-left: auto; padding-right: 12px; border-right: 1px solid #d6d6d6; line-height: 22px; }
.grip { width: 9px; height: 9px; margin: 14px 1px 0 4px; background: radial-gradient(#bbb 1px, transparent 1px) 0 0 / 3px 3px; clip-path: polygon(100% 0, 100% 100%, 0 100%); }
</style>
